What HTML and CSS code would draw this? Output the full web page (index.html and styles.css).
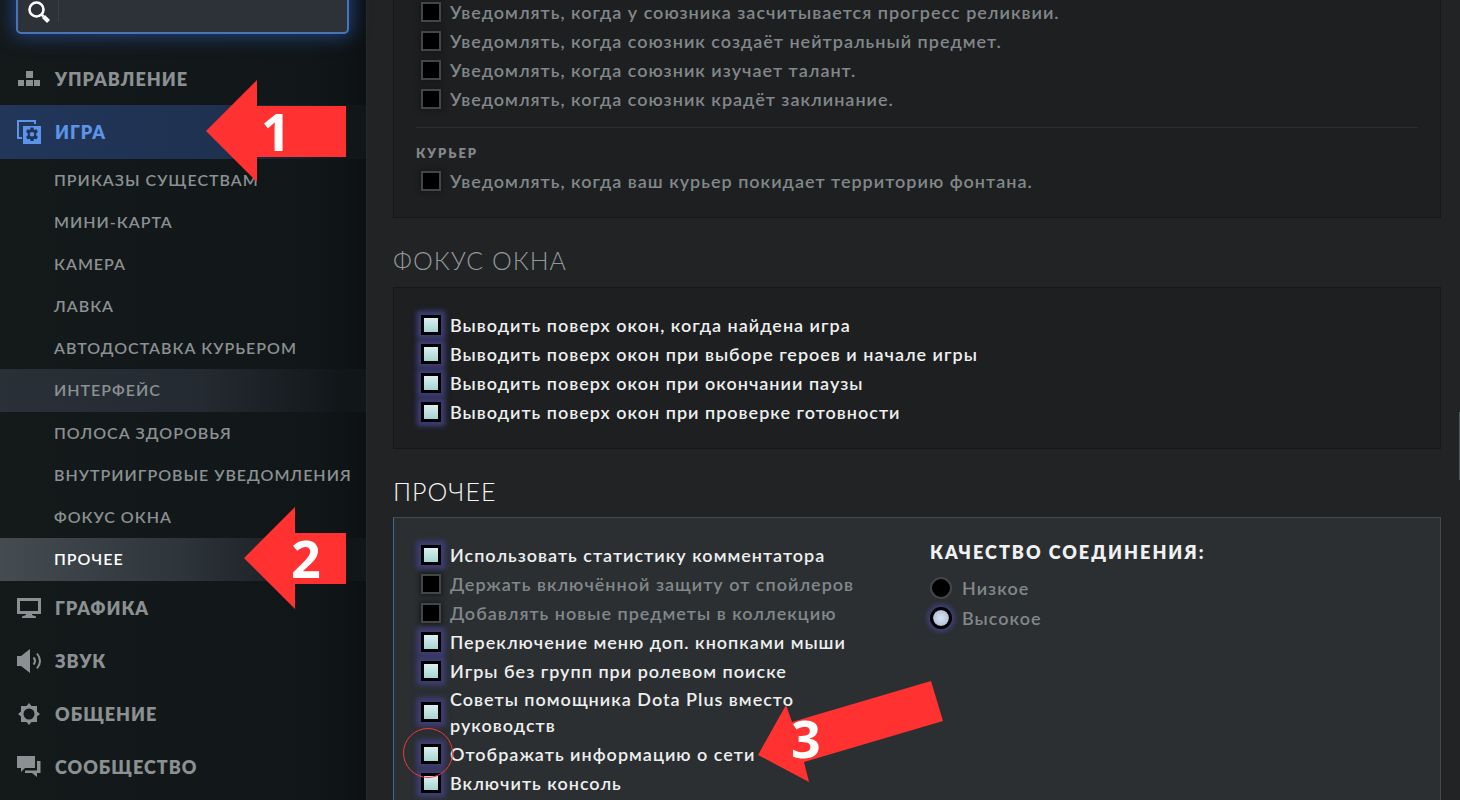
FILE: index.html
```html
<!DOCTYPE html>
<html lang="ru">
<head>
<meta charset="utf-8">
<title>Настройки</title>
<link rel="stylesheet" href="styles.css">
</head>
<body>
<div class="app">
  <aside class="sidebar">
    <div class="search">
      <svg class="search-icon" viewBox="0 0 24 24" width="24" height="24" aria-hidden="true"><circle cx="9.500" cy="9.500" r="7" fill="none" stroke="#fff" stroke-width="2.600"/><path d="M14.500 14.500l2 2" stroke="#fff" stroke-width="2.500"/><path d="M16.500 16.500l5 5" stroke="#fff" stroke-width="4.200"/></svg>
      <input class="search-input" type="text" aria-label="Поиск">
    </div>
    <nav>
      <ul class="menu">
        <li><a class="item" href="#controls"><svg class="icon" viewBox="0 0 26 26"><path d="M10 5h7v7h-7zM2 14h6v6H2zM10 14h7v6h-7zM18 14h6v6h-6z" fill="currentColor"/></svg>Управление</a></li>
        <li><a class="item item-active" href="#game"><svg class="icon" viewBox="0 0 26 26"><path d="M19 5V2H2v17h4" fill="none" stroke="currentColor" stroke-width="2"/><path d="M7 7h18v18H7z" fill="currentColor"/><path d="M14.600 8.600h2.800l.7 2.300 2.400-.6 1.400 2.400-1.700 1.700v1.800l1.700 1.700-1.400 2.400-2.400-.6-.7 2.300h-2.800l-.7-2.300-2.400.6-1.400-2.400 1.700-1.700v-1.800l-1.700-1.700 1.400-2.400 2.400.6zM16 13a2.300 2.300 0 100 4.600 2.300 2.300 0 000-4.600z" fill="#203457" fill-rule="evenodd"/></svg>Игра</a>
          <ul class="submenu">
            <li><a class="sub" href="#units">Приказы существам</a></li>
            <li><a class="sub" href="#minimap">Мини-карта</a></li>
            <li><a class="sub" href="#camera">Камера</a></li>
            <li><a class="sub" href="#shop">Лавка</a></li>
            <li><a class="sub" href="#autocourier">Автодоставка курьером</a></li>
            <li><a class="sub sub-hover" href="#interface">Интерфейс</a></li>
            <li><a class="sub" href="#health">Полоса здоровья</a></li>
            <li><a class="sub" href="#notices">Внутриигровые уведомления</a></li>
            <li><a class="sub" href="#focus">Фокус окна</a></li>
            <li><a class="sub sub-active" href="#misc">Прочее</a></li>
          </ul>
        </li>
        <li><a class="item" href="#video"><svg class="icon" viewBox="0 0 26 26"><path d="M2.500 4.500h21v13h-21z" fill="none" stroke="currentColor" stroke-width="3"/><path d="M10 19h6v1l4 1.500V23H6v-1.500L10 20z" fill="currentColor"/></svg>Графика</a></li>
        <li><a class="item" href="#audio"><svg class="icon" viewBox="0 0 26 26"><path d="M1 8h4l9-7v24l-9-7H1z" fill="currentColor"/><path d="M17.500 9.500q3 3.500 0 7M21 5.500q6 7.500 0 15" fill="none" stroke="currentColor" stroke-width="2"/></svg>Звук</a></li>
        <li><a class="item" href="#social"><svg class="icon" viewBox="0 0 26 26"><path d="M13 2l2.500 3H21v5.500l3 2.500-3 2.500V21h-5.500L13 24l-2.500-3H5v-5.500L2 13l3-2.500V5h5.500zM13 7.500a5.500 5.500 0 100 11 5.500 5.500 0 000-11z" fill="currentColor" fill-rule="evenodd"/></svg>Общение</a></li>
        <li><a class="item" href="#community"><svg class="icon" viewBox="0 0 26 26"><path d="M1 2h18v12H9l-4 4v-4H1z" fill="currentColor"/><path d="M21 7h3.500v12H21v4l-5-4H9v-2.500h12z" fill="currentColor"/></svg>Сообщество</a></li>
      </ul>
    </nav>
  </aside>

  <main class="content">
    <section class="panel panel-cut">
      <label class="row"><input type="checkbox" class="check"><span>Уведомлять, когда у союзника засчитывается прогресс реликвии.</span></label>
      <label class="row"><input type="checkbox" class="check"><span>Уведомлять, когда союзник создаёт нейтральный предмет.</span></label>
      <label class="row"><input type="checkbox" class="check"><span>Уведомлять, когда союзник изучает талант.</span></label>
      <label class="row"><input type="checkbox" class="check"><span>Уведомлять, когда союзник крадёт заклинание.</span></label>
      <h3 class="group-title">Курьер</h3>
      <label class="row"><input type="checkbox" class="check"><span>Уведомлять, когда ваш курьер покидает территорию фонтана.</span></label>
    </section>

    <h2 class="title">Фокус окна</h2>
    <section class="panel">
      <label class="row"><input type="checkbox" class="check" checked><span>Выводить поверх окон, когда найдена игра</span></label>
      <label class="row"><input type="checkbox" class="check" checked><span>Выводить поверх окон при выборе героев и начале игры</span></label>
      <label class="row"><input type="checkbox" class="check" checked><span>Выводить поверх окон при окончании паузы</span></label>
      <label class="row"><input type="checkbox" class="check" checked><span>Выводить поверх окон при проверке готовности</span></label>
    </section>

    <h2 class="title title-active">Прочее</h2>
    <section class="panel panel-active">
      <div class="options">
        <label class="row"><input type="checkbox" class="check" checked><span>Использовать статистику комментатора</span></label>
        <label class="row"><input type="checkbox" class="check"><span>Держать включённой защиту от спойлеров</span></label>
        <label class="row"><input type="checkbox" class="check"><span>Добавлять новые предметы в коллекцию</span></label>
        <label class="row"><input type="checkbox" class="check" checked><span>Переключение меню доп. кнопками мыши</span></label>
        <label class="row"><input type="checkbox" class="check" checked><span>Игры без групп при ролевом поиске</span></label>
        <label class="row"><input type="checkbox" class="check" checked><span>Советы помощника Dota Plus вместо руководств</span></label>
        <label class="row"><input type="checkbox" class="check" checked><span>Отображать информацию о сети</span></label>
        <label class="row"><input type="checkbox" class="check" checked><span>Включить консоль</span></label>
      </div>
      <fieldset class="quality">
        <legend class="quality-title">Качество соединения:</legend>
        <label class="choice"><input type="radio" class="radio" name="quality"><span>Низкое</span></label>
        <label class="choice"><input type="radio" class="radio" name="quality" checked><span>Высокое</span></label>
      </fieldset>
    </section>
  </main>

  <div class="scroll-thumb"></div>
  <div class="mark mark-1"><svg viewBox="0 0 140 102" width="140" height="102"><path d="M0 51L51 0v26h89v51H51v25z" fill="#ff3231"/></svg><span class="digit">1</span></div>
  <div class="mark mark-2"><svg viewBox="0 0 102 102" width="102" height="102"><path d="M0 51L51 0v26h51v51H51v25z" fill="#ff3231"/></svg><span class="digit">2</span></div>
  <div class="mark mark-3"><svg viewBox="0 0 186 102" width="186" height="102"><path d="M0 74L28 24l6 17L173 0l12 40L46 81l5 20z" fill="#ff3231"/></svg><span class="digit">3</span></div>
  <div class="ring"></div>
</div>
</body>
</html>
```

FILE: styles.css
```css
* { box-sizing: border-box; }

body {
  margin: 0;
  background: #212325;
  color: #82888a;
  font-family: Lato, "Noto Sans", sans-serif;
}

.app {
  position: relative;
  display: flex;
  height: 100vh;
  overflow: hidden;
}

/* Sidebar */
.sidebar {
  flex: 0 0 366px;
  background: linear-gradient(90deg, #14191a, #111719 85%, #0d1113);
}

.search {
  display: flex;
  align-items: center;
  height: 50px;
  margin: -16px 17px 18px 16px;
  padding-left: 9px;
  border: 2px solid #4a74b8;
  border-radius: 5px;
  background: #2c3237;
  box-shadow: 0 0 18px 3px #213f76;
}

.search-icon { flex: none; margin-top: 6px; }

.search-input {
  flex: 1;
  min-width: 0;
  height: 26px;
  margin-left: 7px;
  padding: 0 8px;
  border: 0;
  border-left: 1px solid #3a4045;
  outline: 0;
  background: transparent;
  color: #fff;
  font: inherit;
}

.menu,
.submenu {
  margin: 0;
  padding: 0;
  list-style: none;
}

.item,
.sub {
  display: flex;
  align-items: center;
  color: #8b9192;
  text-decoration: none;
  text-transform: uppercase;
}

.item {
  height: 53px;
  padding-left: 16px;
  gap: 13px;
  font-size: 18px;
  font-weight: 800;
  letter-spacing: 1px;
}

.icon { width: 26px; height: 26px; flex: none; }

.item-active {
  height: 54px;
  background: linear-gradient(90deg, #22365a, #1e3150 60%, #111719 95%);
  color: #5c94ea;
}

.sub {
  height: 42px;
  padding: 0 0 2px 54px;
  font-size: 16px;
  font-weight: 600;
  letter-spacing: 1px;
  white-space: nowrap;
}

.sub-hover {
  height: 43px;
  background: linear-gradient(90deg, #293038, #242a31 55%, #111719 93%);
}

.sub-active {
  height: 43px;
  background: linear-gradient(90deg, #444b51, #2d343a 50%, #111719 93%);
  color: #fff;
}

/* Content */
.content {
  flex: 1;
  min-width: 0;
  padding: 0 19px 0 26px;
  border-left: 1px solid #272a2b;
}

.panel {
  padding: 22px;
  border: 1px solid #15171a;
  background: #1d1f21;
}

.panel-cut {
  margin-top: -3px;
  padding-top: 0;
  border-top: 0;
}

.panel-active {
  display: grid;
  grid-template-columns: 1fr 1fr;
  gap: 26px;
  min-height: 320px;
  border-color: #454a4c;
  border-left-color: #3c699f;
  background: #2b2f32;
}

.title {
  height: 69px;
  margin: 0;
  padding-top: 16px;
  color: #92989a;
  font-size: 25px;
  font-weight: 300;
  line-height: 53px;
  letter-spacing: 1px;
  text-transform: uppercase;
}

.title-active {
  height: 68px;
  color: #f4f5f5;
}

.row {
  display: flex;
  align-items: center;
  min-height: 29px;
  gap: 9px;
  padding: 1px 0 1px 5px;
  font-size: 18px;
  font-weight: 600;
  line-height: 26px;
  letter-spacing: 1px;
}

.options .row span { max-width: 410px; }
.row:has(:checked) { color: #eeefef; }

.check,
.radio {
  flex: none;
  margin: 0;
  appearance: none;
  border: 2px solid #434546;
  background: #000;
}

.check {
  width: 20px;
  height: 20px;
  box-shadow: 0 0 5px 1px #141617;
}

.check:checked {
  border: 3px solid #000;
  background: linear-gradient(#dceff1, #a5d5d1) padding-box;
  box-shadow: 0 0 5px 4px #3f3e78;
}

.group-title {
  margin: 14px 0 0;
  padding: 14px 0 2px;
  border-top: 1px solid #2b2d2f;
  font-size: 13px;
  font-weight: 800;
  line-height: 22px;
  letter-spacing: 2px;
  text-transform: uppercase;
}

.quality {
  min-width: 0;
  margin: 0;
  padding: 0;
  border: 0;
}

.quality-title {
  padding: 0 0 9px;
  color: #f0f1f1;
  font-size: 18px;
  font-weight: 800;
  line-height: 24px;
  letter-spacing: 2px;
  text-transform: uppercase;
}

.choice {
  display: flex;
  align-items: center;
  height: 30px;
  gap: 10px;
  font-size: 18px;
  font-weight: 600;
  letter-spacing: 1px;
}

.radio {
  width: 22px;
  height: 22px;
  border-radius: 50%;
}

.radio:checked {
  border: 3px solid #000;
  background: radial-gradient(#d8e2f2, #a6b4d0) padding-box;
  box-shadow: 0 0 4px 3px #3f3e78;
}

.scroll-thumb {
  position: absolute;
  top: 412px;
  right: 0;
  width: 1px;
  height: 68px;
  background: #4a5a5a;
}

/* Step markers over the interface */
.mark,
.ring {
  position: absolute;
  pointer-events: none;
}

.mark svg { display: block; }
.mark-1 { left: 206px; top: 80px; }
.mark-2 { left: 244px; top: 507px; }
.mark-3 { left: 758px; top: 681px; }

.digit {
  position: absolute;
  color: #fff;
  font-family: "Open Sans", sans-serif;
  font-size: 52px;
  font-weight: 700;
  line-height: 52px;
}

.mark-1 .digit { left: 55px; top: 25px; }
.mark-2 .digit { left: 47px; top: 25px; }
.mark-3 .digit { left: 33px; top: 31px; }

.ring {
  left: 403px;
  top: 728px;
  width: 50px;
  height: 50px;
  border: 1px solid #f03a3b;
  border-radius: 50%;
}
```
